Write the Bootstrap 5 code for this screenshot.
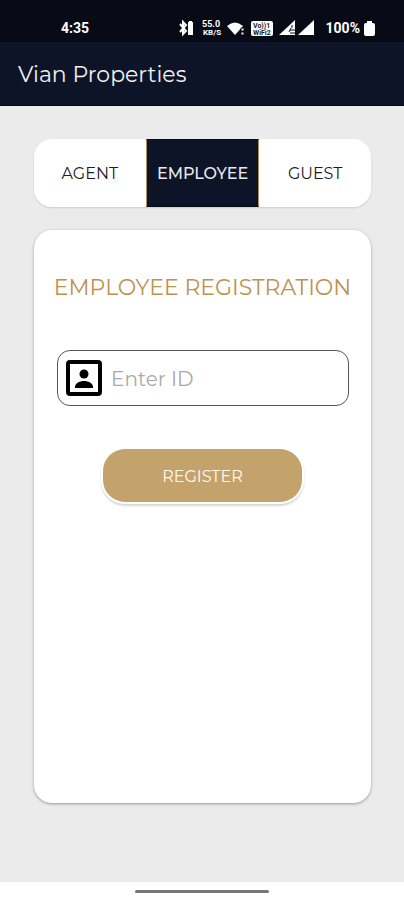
<!DOCTYPE html>
<html lang="en">
<head>
<meta charset="utf-8">
<meta name="viewport" content="width=device-width, initial-scale=1">
<title>Vian Properties</title>
<link href="https://cdn.jsdelivr.net/npm/bootstrap@5.3.0/dist/css/bootstrap.min.css" rel="stylesheet">
<style>
body { font-family: Montserrat, Inter, sans-serif; background: #ebebeb; }
.status-bar { height: 42px; background: #080b16; padding: 14px 29px 0 61px; font: 700 14px/28px Roboto, sans-serif; }
.status-bar svg { display: block; fill: #fff; }
.status-bar svg text { font-family: Roboto, sans-serif; font-weight: 700; }
.app-bar { height: 64px; background: #0d1428; padding: 3px 18px 0; border-bottom: 1px solid #060a16; }
.app-title { font-size: 22px; line-height: 28px; font-weight: 400; color: #f1f1f3; }
.page-main { padding: 33px 33px 79px 34px; gap: 23px; }
.tabs { height: 68px; border-radius: 18px; box-shadow: 0 1px 2px rgba(0,0,0,.14); }
.tabs button { flex: 1 1 0; min-width: 0; padding: 2px 0 0; border: 0; border-radius: 0; background: #fff; color: #1c1c1c; font-size: 16px; line-height: 24px; font-weight: 400; }
.tabs button.active { background: #0d1428; color: #e9e9ee; border: 1px solid #0a0e1a; border-left-color: #b18d58; border-right-color: #b18d58; font-weight: 500; }
.panel { border-radius: 18px; padding-top: 44px; box-shadow: 0 1px 3px rgba(0,0,0,.35); }
.panel-title { font-size: 22px; line-height: 28px; font-weight: 400; color: #bd924f; }
.id-field { height: 56px; margin: 48px 22px 0 23px; padding: 0 8px; gap: 9px; border: 1px solid #55555a; border-radius: 13px; }
.id-field input { font-size: 20px; line-height: 28px; padding: 2px 0 0; color: #333; }
.id-field input::placeholder { color: #a9a9a9; opacity: 1; }
.btn-register { width: 59%; height: 53px; margin-top: 43px; padding: 2px 0 0; border: 0; border-radius: 22px; background: #c4a26c; color: #fffaf0; font-size: 16px; font-weight: 400; box-shadow: 0 0 0 2px #fff, 0 2px 2px 2px rgba(0,0,0,.16); }
.btn-register:hover { background: #b8955e; color: #fff; }
.home-bar { height: 18px; }
.home-bar div { width: 33%; height: 3px; border-radius: 2px; background: #77777a; }
</style>
</head>
<body>
<div class="d-flex flex-column min-vh-100">
  <div class="status-bar d-flex align-items-center justify-content-between text-white">
    <span>4:35</span>
    <div class="d-flex align-items-center">
      <svg width="152" height="18" viewBox="1 0 152 18" role="img" aria-label="Bluetooth, network speed, Wi-Fi and signal">
        <path d="M7 5l6 7-3 3V3l3 3-6 7" fill="none" stroke="#fff" stroke-width="2"/>
        <path d="M15 3h1V2h3v1h1v13h-5z"/>
        <text x="29" y="8" font-size="9">55.0</text>
        <text x="30" y="16" font-size="8">KB/S</text>
        <path d="M54 7Q62 0 70 7l-8 9z"/>
        <path d="M68 9h3v3h-3zM68 13h3v3h-3z" stroke="#080b16" stroke-width="1"/>
        <rect x="78" y="2" width="22" height="15" rx="2"/>
        <text x="80" y="9" font-size="7" style="fill:#15171f">Vo))1</text>
        <text x="80" y="16" font-size="7" style="fill:#15171f">WiFi2</text>
        <path d="M106 16L122 1v15z"/>
        <path d="M119 6v3M117 11h5M118 9l-2 4M117 14h5" stroke="#080b16" stroke-width="1"/>
        <path d="M125 16L141 1v15z"/>
      </svg>
      <span>100%</span>
      <svg class="ms-1" width="11" height="18" viewBox="0 0 11 18" role="img" aria-label="Battery full"><path d="M3 2h5v2h1q2 0 2 2v9q0 2-2 2H2q-2 0-2-2V6q0-2 2-2h1z"/></svg>
    </div>
  </div>
  <header class="app-bar d-flex align-items-center">
    <h1 class="app-title m-0">Vian Properties</h1>
  </header>
  <main class="page-main d-flex flex-column flex-grow-1">
    <nav class="tabs d-flex overflow-hidden" aria-label="Account type">
      <button type="button">AGENT</button>
      <button type="button" class="active" aria-current="true">EMPLOYEE</button>
      <button type="button">GUEST</button>
    </nav>
    <section class="panel bg-white flex-grow-1 d-flex flex-column">
      <h2 class="panel-title m-0 text-center text-nowrap">EMPLOYEE REGISTRATION</h2>
      <div class="id-field d-flex align-items-center">
        <label for="employee-id" class="flex-shrink-0">
          <svg class="d-block" width="36" height="36" viewBox="0 0 36 36" role="img" aria-label="Employee ID">
            <rect x="2" y="2" width="32" height="32" rx="2" fill="none" stroke="#000" stroke-width="4"/>
            <circle cx="18" cy="14" r="4.5"/>
            <path d="M9 28v-1c0-4 5-6 9-6s9 2 9 6v1z"/>
          </svg>
        </label>
        <input id="employee-id" type="text" class="border-0 w-100 bg-transparent" placeholder="Enter ID">
      </div>
      <button type="button" class="btn btn-register align-self-center">REGISTER</button>
    </section>
  </main>
  <footer class="home-bar bg-white d-flex align-items-center justify-content-center"><div></div></footer>
</div>
<script src="https://cdn.jsdelivr.net/npm/bootstrap@5.3.0/dist/js/bootstrap.bundle.min.js"></script>
</body>
</html>
